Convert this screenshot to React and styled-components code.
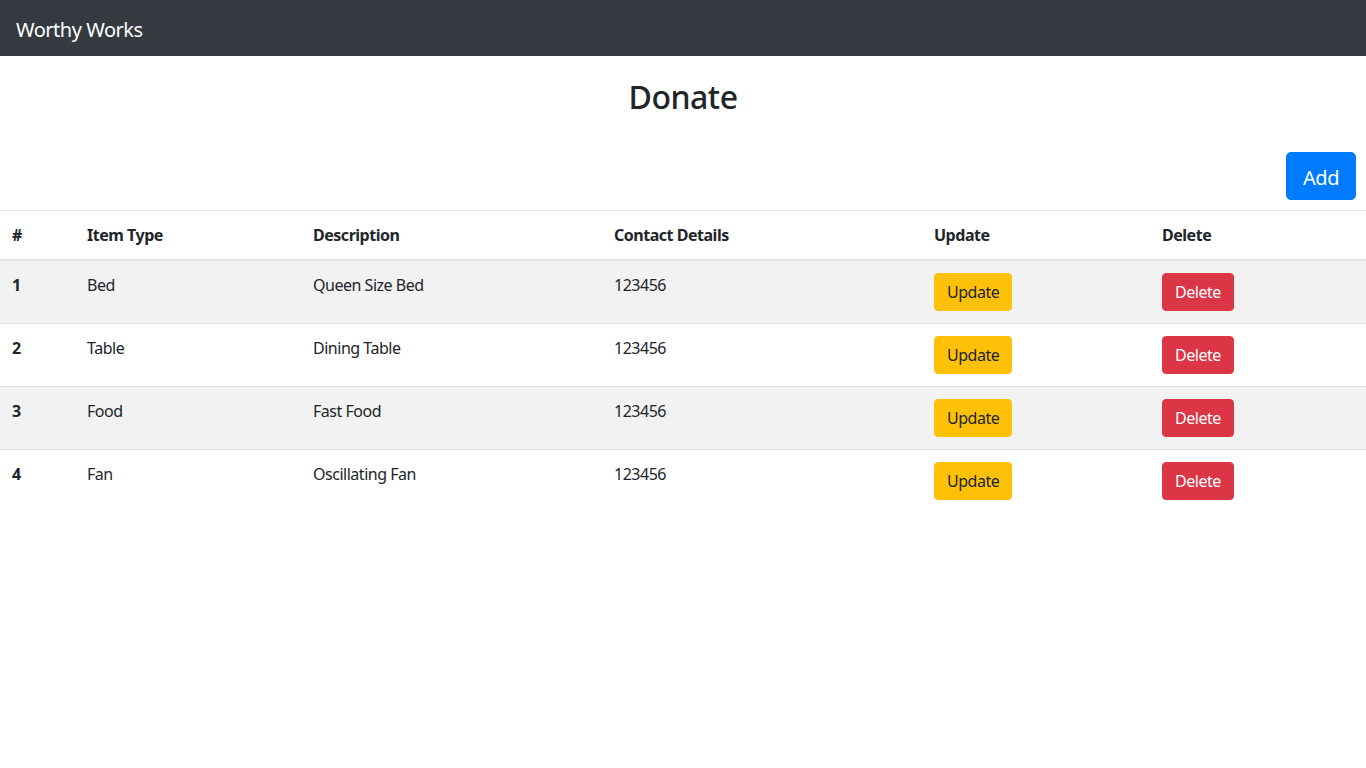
import styled, { createGlobalStyle } from 'styled-components';

const GlobalStyle = createGlobalStyle`
  body {
    margin: 0;
    font-family: "Noto Sans", "Open Sans", sans-serif;
    font-size: 16px;
    line-height: 1.5;
    letter-spacing: -0.03em;
    color: #212529;
    background: #fff;
  }
  * { box-sizing: border-box; }
`;

const items = [
  { id: 1, type: 'Bed', description: 'Queen Size Bed', contact: '123456' },
  { id: 2, type: 'Table', description: 'Dining Table', contact: '123456' },
  { id: 3, type: 'Food', description: 'Fast Food', contact: '123456' },
  { id: 4, type: 'Fan', description: 'Oscillating Fan', contact: '123456' },
];

const columns = [
  { label: '#', width: 75 },
  { label: 'Item Type', width: 226 },
  { label: 'Description', width: 301 },
  { label: 'Contact Details', width: 320 },
  { label: 'Update', width: 228 },
  { label: 'Delete', width: 216 },
];

const App = () => (
  <>
    <GlobalStyle />
    <Navbar>
      <Brand href="#">Worthy Works</Brand>
    </Navbar>

    <Title>Donate</Title>

    <Toolbar>
      <AddButton>Add</AddButton>
    </Toolbar>

    <Table>
      <colgroup>
        {columns.map((c) => (
          <col key={c.label} style={{ width: c.width }} />
        ))}
      </colgroup>
      <thead>
        <tr>
          {columns.map((c) => (
            <Th key={c.label}>{c.label}</Th>
          ))}
        </tr>
      </thead>
      <tbody>
        {items.map((item, i) => (
          <Row key={item.id} $striped={i % 2 === 0}>
            <RowHead>{item.id}</RowHead>
            <Td>{item.type}</Td>
            <Td>{item.description}</Td>
            <Td>{item.contact}</Td>
            <Td>
              <Button $variant="warning">Update</Button>
            </Td>
            <Td>
              <Button $variant="danger">Delete</Button>
            </Td>
          </Row>
        ))}
      </tbody>
    </Table>
  </>
);

export default App;

const Navbar = styled.nav`
  display: flex;
  align-items: center;
  height: 56px;
  padding: 8px 16px;
  background: #343a40;
`;

const Brand = styled.a`
  padding-top: 4px;
  font-size: 20px;
  line-height: 30px;
  color: #fff;
  text-decoration: none;
`;

const Title = styled.h2`
  margin: 22px 0 0;
  text-align: center;
  font-size: 32px;
  font-weight: 500;
  line-height: 1.2;
`;

const Toolbar = styled.div`
  display: flex;
  justify-content: flex-end;
  padding: 36px 10px 10px;
`;

const AddButton = styled.button`
  font-family: inherit;
  font-size: 20px;
  line-height: 1.5;
  letter-spacing: inherit;
  padding: 10px 16px 6px;
  border: 1px solid #007bff;
  border-radius: 4.8px;
  background: #007bff;
  color: #fff;
  cursor: pointer;
`;

const Table = styled.table`
  width: 100%;
  table-layout: fixed;
  border-collapse: collapse;
  color: #212529;
`;

const Th = styled.th`
  padding: 12px;
  text-align: left;
  font-weight: 700;
  border-top: 1px solid #dee2e6;
  border-bottom: 2px solid #dee2e6;
  vertical-align: bottom;
`;

const Row = styled.tr`
  background: ${({ $striped }) => ($striped ? '#f2f2f2' : 'transparent')};
`;

const Td = styled.td`
  padding: 12px;
  vertical-align: top;
  border-top: 1px solid #dee2e6;
`;

const RowHead = styled(Td).attrs({ as: 'th' })`
  text-align: left;
  font-weight: 700;
`;

const Button = styled.button`
  font-family: inherit;
  font-size: 16px;
  line-height: 1.5;
  letter-spacing: inherit;
  padding: 6px 12px;
  border-radius: 4px;
  cursor: pointer;
  border: 1px solid ${({ $variant }) => ($variant === 'danger' ? '#dc3545' : '#ffc107')};
  background: ${({ $variant }) => ($variant === 'danger' ? '#dc3545' : '#ffc107')};
  color: ${({ $variant }) => ($variant === 'danger' ? '#fff' : '#212529')};
`;
